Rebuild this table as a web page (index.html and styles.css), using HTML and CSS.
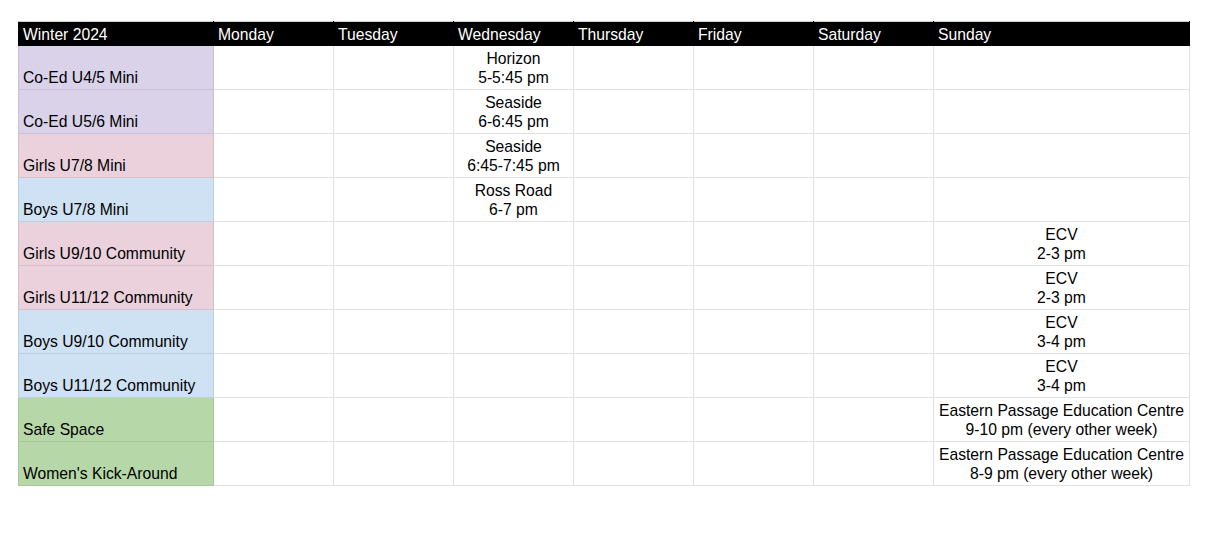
FILE: index.html
```html
<!DOCTYPE html>
<html>
<head>
<meta charset="utf-8">
<link rel="stylesheet" href="styles.css">
</head>
<body>
<table class="sched">
  <colgroup>
    <col class="c-name"><col class="c-day"><col class="c-day"><col class="c-day"><col class="c-day"><col class="c-day"><col class="c-day"><col class="c-sun">
  </colgroup>
  <thead>
    <tr><th>Winter 2024</th><th>Monday</th><th>Tuesday</th><th>Wednesday</th><th>Thursday</th><th>Friday</th><th>Saturday</th><th>Sunday</th></tr>
  </thead>
  <tbody>
    <tr><td class="name purple">Co-Ed U4/5 Mini</td><td></td><td></td><td>Horizon<br>5-5:45 pm</td><td></td><td></td><td></td><td></td></tr>
    <tr><td class="name purple">Co-Ed U5/6 Mini</td><td></td><td></td><td>Seaside<br>6-6:45 pm</td><td></td><td></td><td></td><td></td></tr>
    <tr><td class="name pink">Girls U7/8 Mini</td><td></td><td></td><td>Seaside<br>6:45-7:45 pm</td><td></td><td></td><td></td><td></td></tr>
    <tr><td class="name blue">Boys U7/8 Mini</td><td></td><td></td><td>Ross Road<br>6-7 pm</td><td></td><td></td><td></td><td></td></tr>
    <tr><td class="name pink">Girls U9/10 Community</td><td></td><td></td><td></td><td></td><td></td><td></td><td>ECV<br>2-3 pm</td></tr>
    <tr><td class="name pink">Girls U11/12 Community</td><td></td><td></td><td></td><td></td><td></td><td></td><td>ECV<br>2-3 pm</td></tr>
    <tr><td class="name blue">Boys U9/10 Community</td><td></td><td></td><td></td><td></td><td></td><td></td><td>ECV<br>3-4 pm</td></tr>
    <tr><td class="name blue">Boys U11/12 Community</td><td></td><td></td><td></td><td></td><td></td><td></td><td>ECV<br>3-4 pm</td></tr>
    <tr><td class="name green">Safe Space</td><td></td><td></td><td></td><td></td><td></td><td></td><td>Eastern Passage Education Centre<br>9-10 pm (every other week)</td></tr>
    <tr><td class="name green">Women's Kick-Around</td><td></td><td></td><td></td><td></td><td></td><td></td><td>Eastern Passage Education Centre<br>8-9 pm (every other week)</td></tr>
  </tbody>
</table>
</body>
</html>
```

FILE: styles.css
```css
html, body {
  margin: 0;
  background: #ffffff;
}
body {
  padding: 21px 0 0 18px;
  font-family: "Liberation Sans", Arial, sans-serif;
  font-size: 15.7px;
  color: #000;
}
.sched {
  border-collapse: collapse;
  table-layout: fixed;
  width: 1171px;
}
.c-name { width: 195px; }
.c-day { width: 120px; }
.c-sun { width: 256px; }

.sched th {
  background: #000;
  color: #fff;
  font-weight: normal;
  text-align: left;
  height: 24px;
  box-sizing: border-box;
  padding: 0 4px 1px 4px;
  line-height: 19px;
  vertical-align: bottom;
  border: 1px solid #000;
  border-top-color: #cfcfcf;
  white-space: nowrap;
}
.sched td {
  height: 44px;
  box-sizing: border-box;
  padding: 0 3px 2px 3px;
  line-height: 19px;
  vertical-align: bottom;
  text-align: center;
  border: 1px solid #e2e2e2;
  white-space: nowrap;
}
.sched td.name {
  text-align: left;
  padding-left: 4px;
}
.purple { background: #d9d2e9; border-color: #c8c1d8 !important; }
.pink { background: #ead1dc; border-color: #d6bfc9 !important; }
.blue { background: #cfe2f3; border-color: #bccfe0 !important; }
.green { background: #b6d7a8; border-color: #a8c79b !important; }
```
